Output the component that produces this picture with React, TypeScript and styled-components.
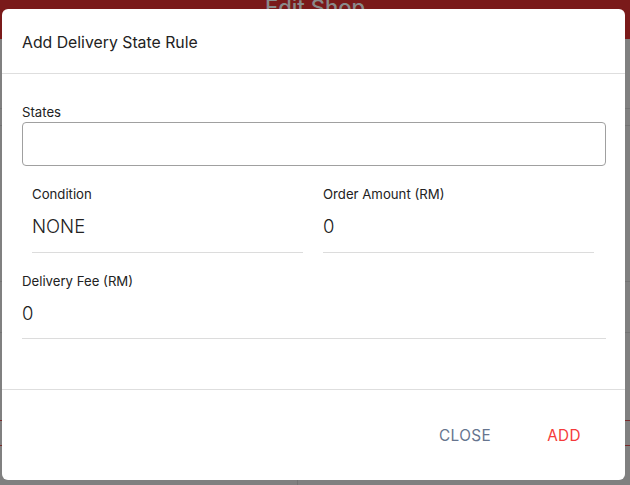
import React from 'react';
import styled, { createGlobalStyle } from 'styled-components';

const GlobalStyle = createGlobalStyle`
  html, body {
    margin: 0;
    padding: 0;
    background: #808080;
    font-family: Inter, "Noto Sans", sans-serif;
  }
  * { box-sizing: border-box; }
`;

const Page = styled.div`
  position: relative;
  width: 630px;
  height: 485px;
  overflow: hidden;
  background: #808080;
`;

const PageHeader = styled.div`
  height: 43px;
  background: #7a1a1a;
  color: #8a8a8a;
  font-size: 22px;
  font-weight: 500;
  display: flex;
  justify-content: center;
  line-height: 22px;
  margin-top: -4px;
`;

const PageRow = styled.div<{ $h: number; $line?: string }>`
  height: ${p => p.$h}px;
  border-bottom: 1px solid ${p => p.$line || '#737373'};
`;

const PageSplit = styled.div`
  display: flex;
  height: 40px;
  & > div:first-child {
    width: 298px;
    border-right: 1px solid #737373;
  }
`;

const Overlay = styled.div`
  position: absolute;
  inset: 0;
  padding: 9px 5px 5px 2px;
`;

const Dialog = styled.div`
  width: 623px;
  height: 471px;
  background: #fff;
  border-radius: 6px;
  display: flex;
  flex-direction: column;
  color: #222;
`;

const Title = styled.div`
  height: 65px;
  padding: 2px 20px 0;
  display: flex;
  align-items: center;
  font-size: 15.8px;
  border-bottom: 1px solid #dedede;
`;

const Body = styled.div`
  height: 316px;
  padding: 30px 19px 0 20px;
  border-bottom: 1px solid #dedede;
`;

const Label = styled.div`
  font-size: 13.2px;
  color: #222;
  line-height: 16px;
`;

const Box = styled.div`
  margin-top: 2px;
  height: 44px;
  border: 1px solid #a0a0a0;
  border-radius: 4px;
`;

const Grid = styled.div`
  display: grid;
  grid-template-columns: 271px 271px;
  column-gap: 20px;
  padding: 0 10px;
  margin-top: 20px;
`;

const Field = styled.div``;

const Value = styled.div<{ $h?: number }>`
  font-size: 18.5px;
  font-weight: 300;
  color: #222;
  height: ${p => p.$h || 51}px;
  padding-top: 14px;
  line-height: 20px;
  border-bottom: 1px solid #dcdcdc;
`;

const WideField = styled.div`
  margin-top: 20px;
`;

const Footer = styled.div`
  flex: 1;
  display: flex;
  justify-content: flex-end;
  align-items: center;
  padding-right: 22px;
  gap: 12px;
`;

const Button = styled.button<{ $color: string }>`
  background: none;
  border: none;
  font-family: inherit;
  font-size: 15.3px;
  letter-spacing: 0.4px;
  color: ${p => p.$color};
  padding: 8px 22px;
  cursor: pointer;
`;

export default function App() {
  return (
    <>
      <GlobalStyle />
      <Page>
        <PageHeader>Edit Shop</PageHeader>
        <PageRow $h={70} />
        <PageRow $h={17} />
        <PageRow $h={156} />
        <PageRow $h={51} />
        <PageRow $h={88} $line="#7a2a2a" />
        <PageRow $h={25} $line="#7a2a2a" />
        <PageSplit><div /><div /></PageSplit>
        <Overlay>
          <Dialog>
            <Title>Add Delivery State Rule</Title>
            <Body>
              <Label>States</Label>
              <Box />
              <Grid>
                <Field>
                  <Label>Condition</Label>
                  <Value>NONE</Value>
                </Field>
                <Field>
                  <Label>Order Amount (RM)</Label>
                  <Value>0</Value>
                </Field>
              </Grid>
              <WideField>
                <Label>Delivery Fee (RM)</Label>
                <Value $h={50}>0</Value>
              </WideField>
            </Body>
            <Footer>
              <Button $color="#66758f">CLOSE</Button>
              <Button $color="#f53a3a">ADD</Button>
            </Footer>
          </Dialog>
        </Overlay>
      </Page>
    </>
  );
}
